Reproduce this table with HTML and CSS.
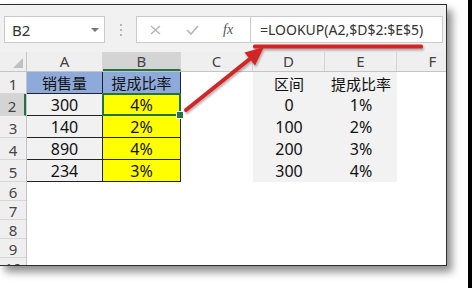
FILE: index.html
```html
<!DOCTYPE html>
<html lang="zh-CN">

<head>
    <meta charset="UTF-8">
    <meta name="viewport" content="width=device-width, initial-scale=1.0">
    <title>LOOKUP</title>
    <link rel="stylesheet" href="styles.css">
</head>

<body>

    <div class="stage">
        <div class="window">
            <!-- name box + formula bar -->
            <div class="toolbar">
                <div class="namebox"><span>B2</span><i class="caret"></i></div>
                <div class="grip">
                    <svg width="4" height="14" viewBox="0 0 4 14">
                        <circle cx="2" cy="2" r="1.1" fill="#a8a8a8" />
                        <circle cx="2" cy="7" r="1.1" fill="#a8a8a8" />
                        <circle cx="2" cy="12" r="1.1" fill="#a8a8a8" />
                    </svg>
                </div>
                <div class="fxbtns">
                    <svg class="btn-x" width="11" height="10" viewBox="0 0 11 10">
                        <path d="M1 1 L10 9 M10 1 L1 9" stroke="#b4b4b4" stroke-width="1.4" fill="none" />
                    </svg>
                    <svg class="btn-ok" width="13" height="10" viewBox="0 0 13 10">
                        <path d="M1 5 L5 9 L12 1" stroke="#b4b4b4" stroke-width="1.6" fill="none" />
                    </svg>
                    <span class="fx">fx</span>
                </div>
                <div class="formula">=LOOKUP(A2,$D$2:$E$5)</div>
            </div>

            <div class="sheet">
                <div class="colheads">
                    <div class="ch corner"></div>
                    <div class="ch col-a">A</div>
                    <div class="ch col-b on">B</div>
                    <div class="ch col-c">C</div>
                    <div class="ch col-d">D</div>
                    <div class="ch col-e">E</div>
                    <div class="ch col-f">F</div>
                </div>

                <div class="grid">
                    <div class="rowheads">
                        <div class="rh tall">1</div>
                        <div class="rh tall on">2</div>
                        <div class="rh tall">3</div>
                        <div class="rh tall">4</div>
                        <div class="rh tall">5</div>
                        <div class="rh">6</div>
                        <div class="rh">7</div>
                        <div class="rh">8</div>
                        <div class="rh">9</div>
                        <div class="rh">10</div>
                    </div>

                    <!-- A1:B5 -->
                    <div class="tbl">
                        <div class="hd">销售量</div>
                        <div class="hd">提成比率</div>
                        <div class="qty">300</div>
                        <div class="rate sel">4%</div>
                        <div class="qty">140</div>
                        <div class="rate">2%</div>
                        <div class="qty">890</div>
                        <div class="rate">4%</div>
                        <div class="qty">234</div>
                        <div class="rate">3%</div>
                    </div>

                    <div class="col-c"></div>

                    <!-- D1:E5 lookup range -->
                    <div class="ref">
                        <div class="cjk">区间</div>
                        <div class="cjk">提成比率</div>
                        <div>0</div>
                        <div>1%</div>
                        <div>100</div>
                        <div>2%</div>
                        <div>200</div>
                        <div>3%</div>
                        <div>300</div>
                        <div>4%</div>
                    </div>
                </div>
            </div>
        </div>

        <div class="edge"></div>

        <!-- red pen marks drawn over the sheet -->
        <svg class="marks" width="472" height="288" viewBox="0 0 472 288">
            <defs>
                <filter id="pen" x="-10%" y="-10%" width="130%" height="160%">
                    <feDropShadow dx="1" dy="2" stdDeviation="1.2" flood-color="#000" flood-opacity="0.3" />
                </filter>
            </defs>
            <g filter="url(#pen)">
                <rect x="253" y="44.5" width="170" height="4" rx="1.5" fill="#d22626" />
                <line x1="186" y1="110" x2="251" y2="58" stroke="#d22626" stroke-width="4" stroke-linecap="round" />
                <polygon points="264,47 244.5,52.5 255,65.5" fill="#d22626" />
            </g>
        </svg>
    </div>

</body>

</html>
```

FILE: styles.css
```css
* {
    box-sizing: border-box;
}

body {
    margin: 0;
    background: #fff;
    font-family: "Noto Sans", "Noto Sans CJK SC", sans-serif;
    color: #111;
}

.stage {
    position: relative;
    width: 472px;
    height: 288px;
    display: flex;
    justify-content: space-between;
    overflow: hidden;
}

.window {
    width: 447px;
    height: 262px;
    margin-top: 4px;
    border: 1px solid #2e2e2e;
    border-left: none;
    background: #fff;
    box-shadow: 5px 6px 8px rgba(0, 0, 0, 0.45);
    display: flex;
    flex-direction: column;
    overflow: hidden;
}

.edge {
    width: 4px;
    background: #000;
}

.marks {
    position: absolute;
    left: 0;
    top: 0;
    pointer-events: none;
}

/* toolbar */

.toolbar {
    height: 47px;
    flex: none;
    background: #f1f1f1;
    display: flex;
    align-items: flex-start;
    padding: 11px 0 0 4px;
}

.namebox {
    width: 101px;
    height: 27px;
    background: #fff;
    border: 1px solid #cbcbcb;
    display: flex;
    align-items: center;
    justify-content: space-between;
    padding: 0 5px 0 7px;
    font-size: 15px;
    color: #333;
}

.caret {
    width: 0;
    height: 0;
    border-left: 4px solid transparent;
    border-right: 4px solid transparent;
    border-top: 4px solid #777;
}

.grip {
    width: 31px;
    height: 27px;
    display: flex;
    align-items: center;
    justify-content: center;
}

.fxbtns {
    width: 114px;
    height: 27px;
    background: #fff;
    border: 1px solid #cbcbcb;
    border-right: none;
    display: flex;
    align-items: center;
    padding-left: 13px;
}

.btn-x {
    margin-right: 25px;
}

.btn-ok {
    margin-right: 24px;
}

.fx {
    font-family: "Liberation Serif", serif;
    font-style: italic;
    font-size: 14px;
    color: #555;
}

.formula {
    width: 193px;
    height: 27px;
    background: #fff;
    border: 1px solid #cbcbcb;
    display: flex;
    align-items: center;
    padding-left: 9px;
    font-size: 14px;
    color: #333;
    white-space: nowrap;
}

/* sheet */

.sheet {
    flex: 1;
    display: flex;
    flex-direction: column;
    min-height: 0;
}

.colheads {
    display: flex;
    height: 20px;
    flex: none;
    background: #efefef;
    border-bottom: 1px solid #c4c4c4;
}

.ch {
    flex: none;
    border-right: 1px solid #d6d6d6;
    text-align: center;
    font-size: 15px;
    line-height: 19px;
    color: #444;
}

.ch.on {
    background: #d4d4d4;
    border-bottom: 2px solid #217346;
}

.corner {
    position: relative;
    width: 27px;
    border-right-color: #c4c4c4;
}

.corner::after {
    content: "";
    position: absolute;
    right: 3px;
    bottom: 3px;
    border-left: 10px solid transparent;
    border-bottom: 10px solid #c0c0c0;
}

.col-a {
    width: 76px;
}

.col-b {
    width: 78px;
}

.col-c,
.col-d,
.col-e,
.col-f {
    width: 72px;
    flex: none;
}

.grid {
    flex: 1;
    display: flex;
    min-height: 0;
}

.rowheads {
    width: 27px;
    flex: none;
    background: #efefef;
    border-right: 1px solid #c4c4c4;
    display: flex;
    flex-direction: column;
}

.rh {
    height: 19px;
    flex: none;
    border-bottom: 1px solid #d6d6d6;
    text-align: center;
    font-size: 15px;
    line-height: 20px;
    color: #444;
}

.rh.tall {
    height: 22px;
    line-height: 24px;
}

.rh.on {
    background: #d4d4d4;
    border-right: 2px solid #217346;
}

.tbl {
    flex: none;
    align-self: flex-start;
    display: grid;
    grid-template-columns: 76px 78px;
    grid-template-rows: repeat(5, 22px);
}

.tbl div {
    border-right: 1px solid #222;
    border-bottom: 1px solid #222;
    display: flex;
    align-items: center;
    justify-content: center;
    font-size: 16px;
}

.tbl .hd {
    background: #8eaadb;
    font-size: 15px;
}

.tbl .qty {
    background: #f1f1f1;
}

.tbl .rate {
    background: #ffff00;
}

/* active cell frame and fill handle */
.tbl .sel {
    position: relative;
}

.sel::after {
    content: "";
    position: absolute;
    left: -1px;
    top: -1px;
    right: -1px;
    bottom: -1px;
    border: 2px solid #217346;
}

.sel::before {
    content: "";
    position: absolute;
    right: -4px;
    bottom: -4px;
    width: 6px;
    height: 6px;
    background: #217346;
    border: 1px solid #fff;
    z-index: 1;
}

.ref {
    flex: none;
    align-self: flex-start;
    display: grid;
    grid-template-columns: 72px 72px;
    grid-template-rows: repeat(5, 22px);
    background: #f2f2f2;
}

.ref div {
    display: flex;
    align-items: center;
    justify-content: center;
    font-size: 16px;
}

.ref .cjk {
    font-size: 15px;
}
```
